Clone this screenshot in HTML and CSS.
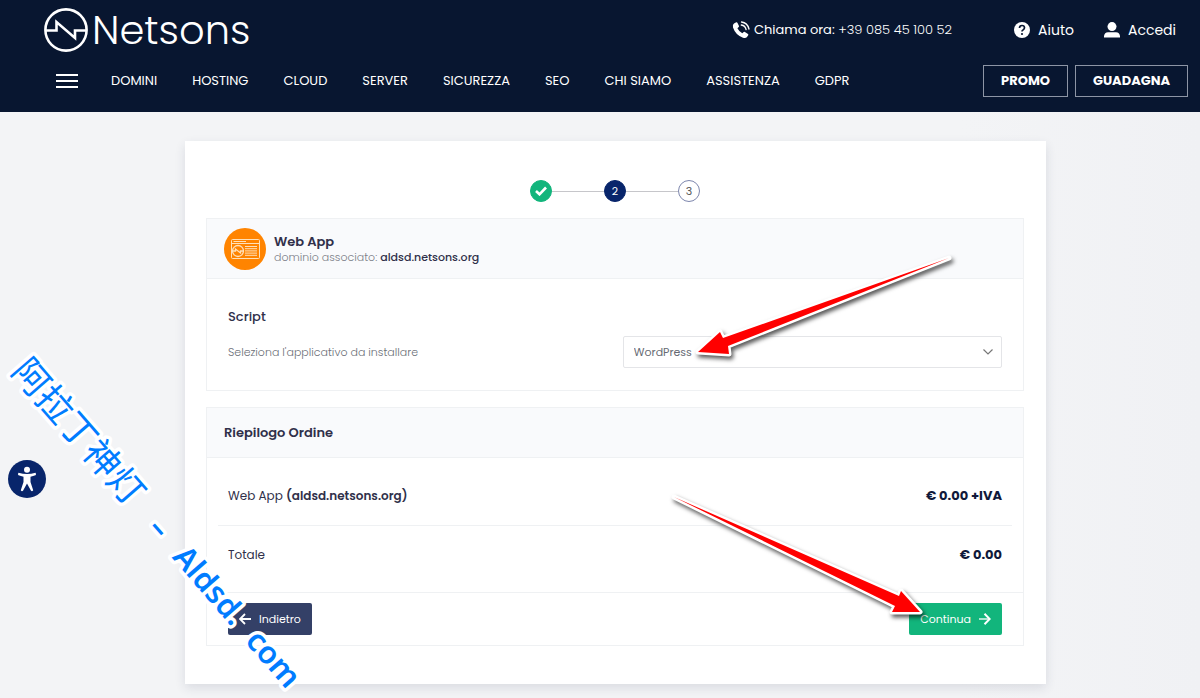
FILE: index.html
```html
<!DOCTYPE html>
<html lang="it">
<head>
<meta charset="utf-8">
<meta name="viewport" content="width=device-width, initial-scale=1">
<title>Netsons - Web App</title>
<link rel="stylesheet" href="styles.css">
</head>
<body>
<header class="site-header">
  <div class="topbar">
    <a class="logo" href="#">
      <svg width="46" height="46" viewBox="0 0 46 46" fill="none" stroke="currentColor" stroke-width="2.6" aria-hidden="true">
        <circle cx="23" cy="23" r="20.6"/>
        <path d="M3 23.500H13.500V15L32 31V23.500H43"/>
      </svg>
      <span>Netsons</span>
    </a>
    <div class="contacts">
      <a class="phone" href="#">
        <svg width="18" height="18" viewBox="0 0 18 18" aria-hidden="true">
          <path fill="currentColor" d="M2 2.500 4.200 1.300Q5 1 5.400 1.700L7 5Q7.200 5.700 6.700 6.100L5.400 7.200Q7 10.500 10.300 12.300L11.700 11Q12.300 10.600 12.900 10.900L16 12.900Q16.700 13.500 16.200 14.200L14.800 16.300Q13.500 17.500 11 16.700 3.500 14 1 6.500 .4 3.700 2 2.500Z"/>
          <path fill="none" stroke="currentColor" stroke-width="1.300" stroke-linecap="round" d="M9.500 1Q15.500 1.700 17 8M9.300 4Q13.300 4.600 14.100 8.600"/>
        </svg>
        <span>Chiama ora: <span class="number">+39 085 45 100 52</span></span>
      </a>
      <a class="account" href="#">
        <svg width="16" height="16" viewBox="0 0 16 16" aria-hidden="true">
          <circle cx="8" cy="8" r="8" fill="currentColor"/>
          <path d="M5.500 6Q5.600 3.500 8 3.500T10.500 5.800Q10.500 7.100 9 7.900 8 8.400 8 9.500" fill="none" stroke="#081630" stroke-width="1.700"/>
          <circle cx="8" cy="12" r="1.100" fill="#081630"/>
        </svg>
        <span>Aiuto</span>
      </a>
      <a class="account" href="#">
        <svg width="16" height="16" viewBox="0 0 16 16" fill="currentColor" aria-hidden="true">
          <circle cx="8" cy="4.600" r="4.500"/>
          <path d="M0 15.500V14Q.5 10.500 4 10.200H12Q15.500 10.500 16 14V15.500Z"/>
        </svg>
        <span>Accedi</span>
      </a>
    </div>
  </div>
  <div class="navbar">
    <button class="menu" type="button" aria-label="Menu"><i></i><i></i><i></i></button>
    <nav class="nav">
      <a href="#">DOMINI</a>
      <a href="#">HOSTING</a>
      <a href="#">CLOUD</a>
      <a href="#">SERVER</a>
      <a href="#">SICUREZZA</a>
      <a href="#">SEO</a>
      <a href="#">CHI SIAMO</a>
      <a href="#">ASSISTENZA</a>
      <a href="#">GDPR</a>
    </nav>
    <div class="promos">
      <a href="#">PROMO</a>
      <a href="#">GUADAGNA</a>
    </div>
  </div>
</header>

<main class="page">
  <div class="card">
    <ol class="steps">
      <li class="step done">
        <svg width="12" height="10" viewBox="0 0 12 10" fill="none" stroke="currentColor" stroke-width="2.600" aria-label="1"><path d="M1 5 4.500 8.300 11 1.500"/></svg>
      </li>
      <li class="step current">2</li>
      <li class="step">3</li>
    </ol>

    <section class="panel">
      <div class="panel-head">
        <svg width="42" height="42" viewBox="0 0 42 42" aria-hidden="true">
          <circle cx="21" cy="21" r="21" fill="#ff8400"/>
          <g fill="none" stroke="#ffe0b8" stroke-width="1">
            <rect x="7.500" y="11.500" width="28" height="19" rx="1"/>
            <path d="M8 15.500H35M9.500 13.500H22"/>
            <path d="M21 18.500H33M21 20.700H33M21 22.900H33M21 25.100H33M21 27.300H33"/>
            <circle cx="14" cy="23" r="5.500" fill="#ff8400" stroke-width="1.300"/>
            <path d="M9 23H11.500V21L16.500 25V23H19" stroke-width="1.300"/>
          </g>
        </svg>
        <div>
          <h1 class="panel-title">Web App</h1>
          <p class="domain">dominio associato: <strong>aldsd.netsons.org</strong></p>
        </div>
      </div>
      <div class="script">
        <h2>Script</h2>
        <div class="field">
          <label for="app">Seleziona l'applicativo da installare</label>
          <div class="select">
            <select id="app"><option>WordPress</option></select>
            <svg width="10" height="6" viewBox="0 0 10 6" fill="none" stroke="currentColor" stroke-width="1.200" aria-hidden="true"><path d="M.5 .5 5 5 9.500 .5"/></svg>
          </div>
        </div>
      </div>
    </section>

    <section class="panel">
      <div class="panel-head summary-head"><h2 class="panel-title">Riepilogo Ordine</h2></div>
      <div class="summary">
        <div class="line"><span>Web App <strong>(aldsd.netsons.org)</strong></span><b>€ 0.00 +IVA</b></div>
        <div class="line"><span>Totale</span><b>€ 0.00</b></div>
      </div>
      <div class="actions">
        <button class="btn back" type="button">
          <svg width="12" height="12" viewBox="0 0 12 12" fill="none" stroke="currentColor" stroke-width="1.800" aria-hidden="true"><path d="M12 6H1M6 1 1 6 6 11"/></svg>
          Indietro
        </button>
        <button class="btn next" type="button">
          Continua
          <svg width="12" height="12" viewBox="0 0 12 12" fill="none" stroke="currentColor" aria-hidden="true"><path d="M0 6H10" stroke-width="1.300"/><path d="M5.500 .8 10.700 6 5.500 11.200" stroke-width="2"/></svg>
        </button>
      </div>
    </section>
  </div>
</main>

<button class="accessibility" type="button" aria-label="Accessibilità">
  <svg width="38" height="38" viewBox="0 0 38 38" aria-hidden="true">
    <circle cx="19" cy="9.800" r="3" fill="currentColor"/>
    <path fill="currentColor" d="M10.500 12.700Q19 15.200 27.500 12.700 28.700 14.200 27.500 15.200L22.500 16.700V22L25.200 30.300Q24.200 31.700 23 30.800L19 23.500 15 30.800Q13.700 31.700 12.800 30.300L15.500 22V16.700L10.500 15.200Q9.300 14.200 10.500 12.700Z"/>
  </svg>
</button>

<svg class="marks" width="1200" height="698" viewBox="0 0 1200 698" aria-hidden="true">
  <g class="arrow">
    <path d="M698 352 720 332 723 338 949 258 728 346 729 354Z"/>
    <path d="M674 497 899 596 901 591 920 612 892 612 895 606Z"/>
  </g>
  <g class="watermark" transform="translate(29 374) rotate(49)">
    <text class="han" x="-14" y="13">阿拉丁神灯</text>
    <text x="194" y="13">–</text>
    <text x="232" y="13">Aldsd.</text>
    <text x="343" y="13">com</text>
  </g>
</svg>
</body>
</html>
```

FILE: styles.css
```css
* { box-sizing: border-box; }

body {
  position: relative;
  margin: 0;
  background: linear-gradient(90deg, #f3f4f6 80%, #f0f1f4);
  color: #30304a;
  font-family: Poppins, Inter, "Liberation Sans", sans-serif;
  font-size: 12px;
}

a { color: inherit; text-decoration: none; }
h1, h2, p, ol { margin: 0; padding: 0; }
svg { flex: none; }
button, select { font: inherit; }

.site-header {
  height: 112px;
  background: #081630;
  color: #fff;
}

.topbar, .navbar, .logo, .contacts, .contacts a, .nav, .promos { display: flex; align-items: center; }

.topbar { height: 60px; padding: 0 24px 0 43px; justify-content: space-between; }
.logo { gap: 3px; font-weight: 300; font-size: 40px; line-height: 48px; }
.contacts { font-size: 14px; }
.phone { gap: 4px; margin-right: 62px; font-size: 13px; }
.number { font-weight: 300; }
.account { gap: 8px; }
.account + .account { margin-left: 30px; }

.navbar { height: 42px; padding: 0 12px 0 56px; }
.menu {
  display: grid;
  gap: 4px;
  width: 22px;
  padding: 0;
  border: 0;
  background: none;
}
.menu i { height: 2px; background: #fff; }
.nav { gap: 35px; margin-left: 33px; font-size: 13px; }
.promos { gap: 7px; margin-left: auto; }
.promos a {
  padding: 0 17px;
  border: 1px solid #8d95a5;
  font-size: 13px;
  font-weight: 700;
  line-height: 30px;
}

.page { padding: 29px 154px 14px 185px; }
.card {
  padding: 39px 22px 38px 21px;
  background: #fff;
  box-shadow: 0 4px 10px rgba(40, 50, 80, .12);
}

.steps { display: flex; justify-content: center; list-style: none; }
.step {
  position: relative;
  display: grid;
  place-items: center;
  width: 22px;
  height: 22px;
  border: 1px solid #7d86ad;
  border-radius: 50%;
  color: #555;
  font-size: 11px;
}
.step + .step { margin-left: 52px; }
.step + .step::before {
  content: "";
  position: absolute;
  top: 10px;
  right: 21px;
  width: 52px;
  height: 1px;
  background: #c6c6ca;
}
.done { border-color: #12b57c; background: #12b57c; color: #fff; }
.current { border-color: #08256b; background: #08256b; color: #fff; }

.panel { margin-top: 16px; border: 1px solid #eff1f3; }
.panel-head {
  display: flex;
  align-items: center;
  gap: 8px;
  height: 60px;
  padding: 0 17px;
  border-bottom: 1px solid #eff1f3;
  background: #f9fafc;
}
.panel-title { font-size: 13px; font-weight: 600; line-height: 16px; }
.domain { color: #7c8088; font-size: 11px; font-weight: 300; line-height: 14px; }
.domain strong { color: #30304a; font-weight: 500; }

.script { padding: 28px 21px 22px; }
.script h2 { font-size: 13px; font-weight: 500; line-height: 20px; }
.field { display: flex; align-items: center; justify-content: space-between; margin-top: 9px; }
.field label { color: #6c7078; font-size: 11px; font-weight: 300; }
.select { position: relative; width: 49%; }
.select select {
  width: 100%;
  height: 32px;
  padding: 0 10px;
  border: 1px solid #e4e5e8;
  border-radius: 2px;
  background: #fff;
  color: #666a73;
  font-size: 11px;
  appearance: none;
}
.select svg { position: absolute; top: 13px; right: 9px; color: #777; }

.summary-head { height: 50px; }
.summary { padding: 9px 11px; }
.line {
  display: flex;
  align-items: center;
  justify-content: space-between;
  height: 58px;
  padding: 0 10px;
}
.line + .line { border-top: 1px solid #eff1f3; }
.line strong { font-weight: 600; }
.line b { color: #10193a; font-size: 13px; font-weight: 700; }

.actions {
  display: flex;
  justify-content: space-between;
  padding: 10px 21px;
  border-top: 1px solid #eff1f3;
}
.btn {
  display: flex;
  align-items: center;
  gap: 8px;
  height: 32px;
  padding: 0 11px;
  border: 0;
  border-radius: 2px;
  color: #fff;
  font-size: 11px;
}
.back { background: #344067; }
.next { background: #12b57c; }

.accessibility {
  position: absolute;
  top: 460px;
  left: 8px;
  width: 38px;
  height: 38px;
  padding: 0;
  border: 0;
  border-radius: 50%;
  background: #08256b;
  color: #fff;
}

.marks { position: absolute; top: 0; left: 0; pointer-events: none; }
.arrow path {
  fill: #f00;
  stroke: #fff;
  stroke-width: 5px;
  stroke-linejoin: round;
  paint-order: stroke;
}
.arrow { filter: drop-shadow(2px 3px 2px rgba(0, 0, 0, .65)); }
.watermark {
  fill: #007cff;
  stroke: #fff;
  stroke-width: 7px;
  stroke-linejoin: round;
  paint-order: stroke;
  font-family: "Noto Sans", "Noto Sans CJK SC", sans-serif;
  font-size: 31px;
  font-weight: 600;
}
.han { font-family: "Noto Sans CJK SC", sans-serif; font-size: 36px; font-weight: 400; }
```
